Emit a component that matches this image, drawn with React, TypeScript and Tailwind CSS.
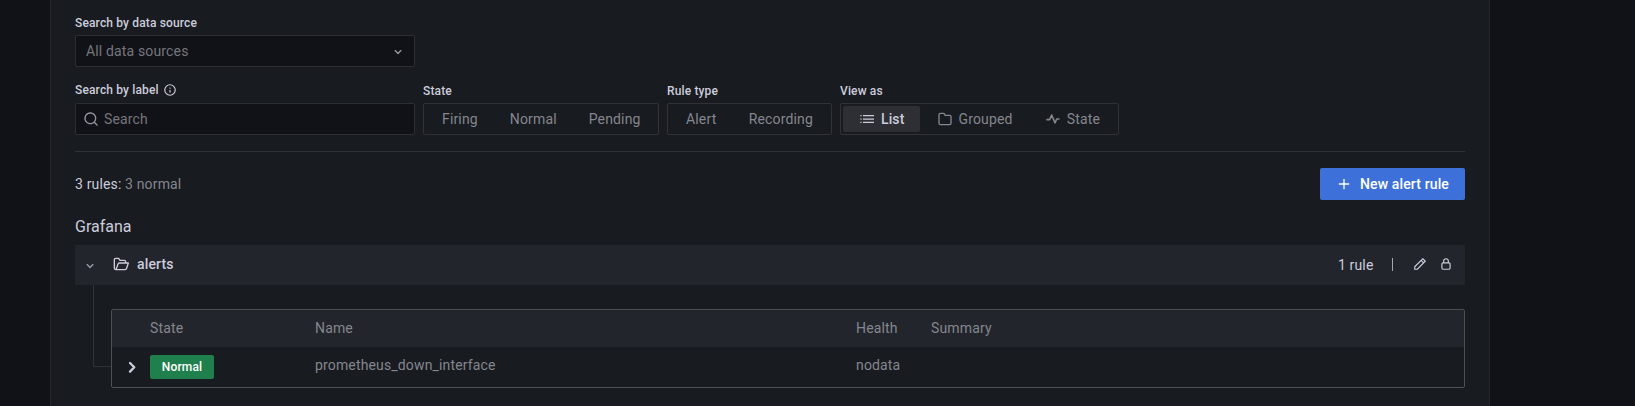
import React from "react";

const paths = {
  angleDown:
    "M17,9.17a1,1,0,0,0-1.41,0L12,12.71,8.46,9.17a1,1,0,0,0-1.41,0,1,1,0,0,0,0,1.42l4.24,4.24a1,1,0,0,0,1.42,0L17,10.59A1,1,0,0,0,17,9.17Z",
  info:
    "M12,2A10,10,0,1,0,22,12,10.01114,10.01114,0,0,0,12,2Zm0,18a8,8,0,1,1,8-8A8.00917,8.00917,0,0,1,12,20Zm0-8.5a1,1,0,0,0-1,1v3a1,1,0,0,0,2,0v-3A1,1,0,0,0,12,11.5Zm0-4a1.25,1.25,0,1,0,1.25,1.25A1.25,1.25,0,0,0,12,7.5Z",
  search:
    "M21.71,20.29,18,16.61A9,9,0,1,0,16.61,18l3.68,3.68a1,1,0,0,0,1.42,0A1,1,0,0,0,21.71,20.29ZM11,18a7,7,0,1,1,7-7A7,7,0,0,1,11,18Z",
  folder:
    "M19,5.5H12.72l-.32-1a3,3,0,0,0-2.84-2H5a3,3,0,0,0-3,3v13a3,3,0,0,0,3,3H19a3,3,0,0,0,3-3V8.5A3,3,0,0,0,19,5.5Zm1,13a1,1,0,0,1-1,1H5a1,1,0,0,1-1-1V5.5a1,1,0,0,1,1-1H9.56a1,1,0,0,1,.95.68l.54,1.64A1,1,0,0,0,12,7.5h7a1,1,0,0,1,1,1Z",
  plus:
    "M19,11H13V5a1,1,0,0,0-2,0v6H5a1,1,0,0,0,0,2h6v6a1,1,0,0,0,2,0V13h6a1,1,0,0,0,0-2Z",
  pen:
    "M22,7.24a1,1,0,0,0-.29-.71L17.47,2.29A1,1,0,0,0,16.76,2a1,1,0,0,0-.71.29L13.22,5.12h0L2.29,16.05a1,1,0,0,0-.29.71V21a1,1,0,0,0,1,1H7.24A1,1,0,0,0,8,21.71L18.87,10.78h0L21.71,8a1.19,1.19,0,0,0,.22-.33,1,1,0,0,0,0-.24.7.7,0,0,0,0-.14ZM6.83,20H4V17.17l9.93-9.93,2.83,2.83ZM18.17,8.66,15.34,5.83l1.42-1.41,2.82,2.82Z",
  lock:
    "M17,9V7A5,5,0,0,0,7,7V9a3,3,0,0,0-3,3v7a3,3,0,0,0,3,3H17a3,3,0,0,0,3-3V12A3,3,0,0,0,17,9ZM9,7a3,3,0,0,1,6,0V9H9Zm9,12a1,1,0,0,1-1,1H7a1,1,0,0,1-1-1V12a1,1,0,0,1,1-1H17a1,1,0,0,1,1,1Z",
};

function Icon({ name, className }: { name: keyof typeof paths; className: string }) {
  return (
    <svg viewBox="0 0 24 24" fill="currentColor" className={`shrink-0 ${className}`}>
      <path d={paths[name]} />
    </svg>
  );
}

function StrokeIcon({ d, className, width = 2 }: { d: string; className: string; width?: number }) {
  return (
    <svg
      viewBox="0 0 24 24"
      fill="none"
      stroke="currentColor"
      strokeWidth={width}
      strokeLinecap="round"
      strokeLinejoin="round"
      className={`shrink-0 ${className}`}
    >
      <path d={d} />
    </svg>
  );
}

function ListIcon() {
  return (
    <svg viewBox="0 0 16 16" fill="currentColor" className="size-4 shrink-0">
      <path d="M4 4h11v1.300H4zM4 7.400h11v1.300H4zM4 10.700h11v1.300H4z" />
      <path opacity=".6" d="M1 4h2v1.300H1zM1 7.400h2v1.300H1zM1 10.700h2v1.300H1z" />
    </svg>
  );
}

function Field({ label, children }: { label: React.ReactNode; children: React.ReactNode }) {
  return (
    <div>
      <div className="flex h-[15px] items-center text-[12px] font-medium leading-[15px] tracking-[0.15px]">{label}</div>
      <div className="mt-1">{children}</div>
    </div>
  );
}

function Option({ children, active }: { children: React.ReactNode; active?: boolean }) {
  return (
    <div
      className={`flex h-[26px] items-center gap-1.5 rounded-[2px] px-4 ${
        active ? "bg-[#2d2f34] font-medium tracking-[0.1px] text-[#ccccdc]" : ""
      }`}
    >
      {children}
    </div>
  );
}

function Group({ children, className }: { children: React.ReactNode; className: string }) {
  return (
    <div
      className={`flex h-8 items-center justify-between rounded-[2px] border border-[#303237] px-0.5 text-[#85868f] ${className}`}
    >
      {children}
    </div>
  );
}

export default function App() {
  return (
    <div className="h-[406px] overflow-hidden bg-[#111217] pl-[50px] font-['Roboto',sans-serif] text-[14px] leading-[22px] tracking-[0.15px] text-[#ccccdc]">
      <main className="h-full w-[1440px] border-x border-[#25272c] bg-[#181b1f] px-6 pt-4">
        <Field label="Search by data source">
          <div className="flex h-8 w-[340px] items-center justify-between rounded-[2px] border border-[#2d2e34] bg-[#111217] pl-2.5 pr-2 text-[#75767d]">
            <span>All data sources</span>
            <Icon name="angleDown" className="mt-0.5 size-4 text-[#9a9aa6]" />
          </div>
        </Field>

        <div className="mt-[17px] flex gap-2">
          <Field
            label={
              <div className="flex items-center pb-0.5">
                <span>Search by label</span>
                <Icon name="info" className="mb-px ml-1 size-[14px]" />
              </div>
            }
          >
            <div className="flex h-8 w-[340px] items-center rounded-[2px] border border-[#2d2e34] bg-[#111217] pl-[7px] text-[#75767d]">
              <Icon name="search" className="mr-[5px] size-4 text-[#9293a0]" />
              <span>Search</span>
            </div>
          </Field>
          <Field label="State">
            <Group className="w-[236px]">
              <Option>Firing</Option>
              <Option>Normal</Option>
              <Option>Pending</Option>
            </Group>
          </Field>
          <Field label="Rule type">
            <Group className="w-[165px]">
              <Option>Alert</Option>
              <Option>Recording</Option>
            </Group>
          </Field>
          <Field label="View as">
            <Group className="w-[279px]">
              <Option active>
                <ListIcon />
                List
              </Option>
              <Option>
                <Icon name="folder" className="size-4" />
                Grouped
              </Option>
              <Option>
                <StrokeIcon d="M3 13h4l3-7 5 12 2.500-6H21" width={2.4} className="size-4" />
                State
              </Option>
            </Group>
          </Field>
        </div>

        <div className="mt-4 h-px bg-[#303237]" />

        <div className="mt-4 flex h-8 items-center justify-between">
          <div>
            3 rules: <span className="text-[#85868f]">3 normal</span>
          </div>
          <button className="flex h-8 w-[145px] items-center rounded-[2px] bg-[#3d71d9] pl-4 font-medium text-white">
            <Icon name="plus" className="mr-2 size-4" />
            <span className="tracking-[0.13px]">New alert rule</span>
          </button>
        </div>

        <h2 className="mt-4 text-[16px] leading-[22px] tracking-normal">Grafana</h2>

        <div className="mt-[7px] flex h-10 items-center bg-[#22252b] pr-3">
          <Icon name="angleDown" className="ml-[7px] mt-0.5 size-4 text-[#9a9aa6]" />
          <StrokeIcon
            d="M4.500 20.500a2.500 2.500 0 0 1-2.500-2.500V5.500A2 2 0 0 1 4 3.500h4.500l2 3H17a2 2 0 0 1 2 2v1.500M4.500 20.500l3-8.500A2 2 0 0 1 9.400 10.500H23l-2.800 8.500A2 2 0 0 1 18.300 20.500Z"
            className="mb-0.5 ml-[15px] size-4"
          />
          <span className="mb-0.5 ml-2 font-medium">alerts</span>
          <span className="ml-auto">1 rule</span>
          <span className="mb-0.5 ml-[17px] mr-px h-[13px] w-[1.5px] translate-x-px bg-[#a5a5b2]" />
          <Icon name="pen" className="mb-0.5 ml-5 size-[14px]" />
          <Icon name="lock" className="mb-0.5 ml-3 size-[14px]" />
        </div>

        <div className="flex">
          <div className="ml-[18px] h-[82px] w-[18px] border-b border-l border-[#303237]" />
          <div className="mt-6 h-[79px] flex-1 rounded-[2px] border border-[#4c4f54]">
            <div className="grid h-[37px] grid-cols-[38px_165px_541px_75px_1fr] items-center bg-[#22252b] pb-0.5 text-[#85868f]">
              <span />
              <span>State</span>
              <span>Name</span>
              <span>Health</span>
              <span>Summary</span>
            </div>
            <div className="grid h-10 grid-cols-[38px_165px_541px_75px_1fr] items-center text-[#85868f]">
              <StrokeIcon d="M10 8l4.300 4.300-4.300 4.300" width={2.3} className="ml-2 size-6 text-[#ccccdc]" />
              <span className="flex h-6 w-16 items-center justify-center rounded-[2px] bg-[#1f7f4d] text-[12px] font-medium text-white">
                Normal
              </span>
              <span className="pb-1">prometheus_down_interface</span>
              <span className="pb-1">nodata</span>
            </div>
          </div>
        </div>
      </main>
    </div>
  );
}
